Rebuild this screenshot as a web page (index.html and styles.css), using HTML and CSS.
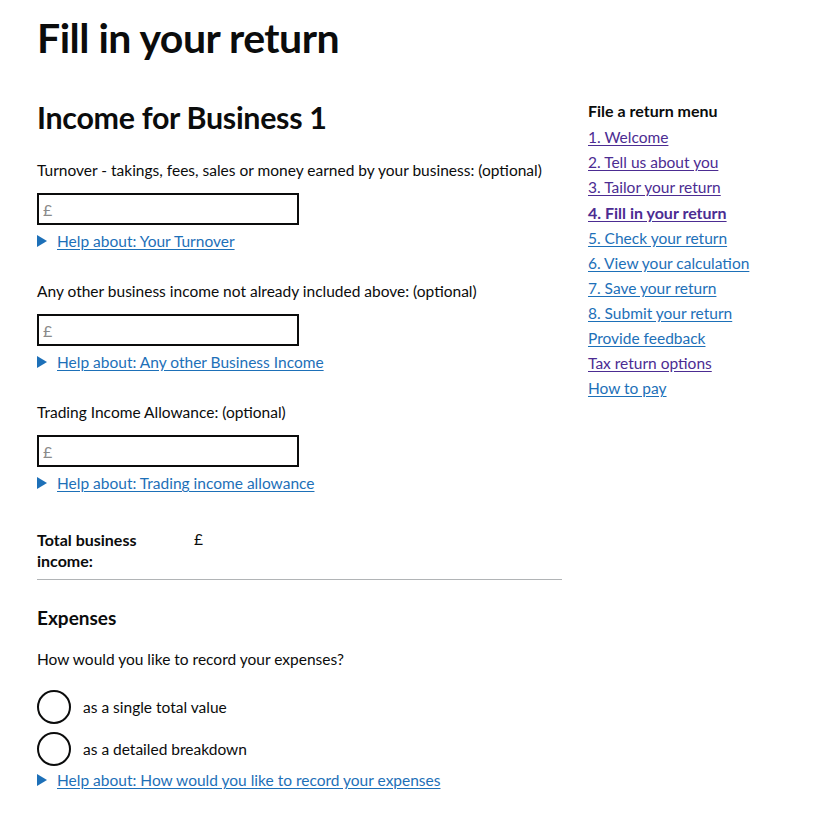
FILE: index.html
```html
<!DOCTYPE html>
<html lang="en">
<head>
<meta charset="utf-8">
<title>Fill in your return</title>
<link rel="stylesheet" href="styles.css">
</head>
<body>
<div class="page">
  <h1 class="title">Fill in your return</h1>
  <div class="layout">
    <main class="main">
      <h2 class="subtitle">Income for Business 1</h2>

      <div class="field">
        <label class="label" for="turnover">Turnover - takings, fees, sales or money earned by your business: (optional)</label>
        <input class="input" id="turnover" type="text" placeholder="£">
        <div class="help"><span class="arrow"></span><a href="#">Help about: Your Turnover</a></div>
      </div>

      <div class="field">
        <label class="label" for="other">Any other business income not already included above: (optional)</label>
        <input class="input" id="other" type="text" placeholder="£">
        <div class="help"><span class="arrow"></span><a href="#">Help about: Any other Business Income</a></div>
      </div>

      <div class="field">
        <label class="label" for="allowance">Trading Income Allowance: (optional)</label>
        <input class="input" id="allowance" type="text" placeholder="£">
        <div class="help"><span class="arrow"></span><a href="#">Help about: Trading income allowance</a></div>
      </div>

      <div class="total">
        <div class="total-key">Total business income:</div>
        <div class="total-value">£</div>
      </div>

      <h3 class="section">Expenses</h3>
      <p class="question">How would you like to record your expenses?</p>
      <div class="radios">
        <label class="radio"><span class="circle"></span><span>as a single total value</span></label>
        <label class="radio"><span class="circle"></span><span>as a detailed breakdown</span></label>
      </div>
      <div class="help"><span class="arrow"></span><a href="#">Help about: How would you like to record your expenses</a></div>
    </main>

    <nav class="side">
      <h2 class="side-title">File a return menu</h2>
      <ul class="menu">
        <li><a class="visited" href="#">1. Welcome</a></li>
        <li><a class="visited" href="#">2. Tell us about you</a></li>
        <li><a class="visited" href="#">3. Tailor your return</a></li>
        <li><a class="current" href="#">4. Fill in your return</a></li>
        <li><a href="#">5. Check your return</a></li>
        <li><a href="#">6. View your calculation</a></li>
        <li><a href="#">7. Save your return</a></li>
        <li><a href="#">8. Submit your return</a></li>
        <li><a href="#">Provide feedback</a></li>
        <li><a class="visited" href="#">Tax return options</a></li>
        <li><a href="#">How to pay</a></li>
      </ul>
    </nav>
  </div>
</div>
</body>
</html>
```

FILE: styles.css
```css
* { box-sizing: border-box; }
html, body { margin: 0; padding: 0; background: #fff; }
body {
  font-family: Lato, "Noto Sans", sans-serif;
  color: #0b0c0c;
  font-size: 15.5px;
}
.page { padding: 14px 37px 0 37px; }
.title {
  font-size: 41px;
  font-weight: 700;
  line-height: 48px;
  margin: 0 0 38px 0;
  letter-spacing: -0.5px;
}
.layout { display: flex; gap: 26px; }
.main { width: 525px; flex: none; }
.side { flex: 1; min-width: 0; }
.subtitle {
  font-size: 30.4px;
  font-weight: 700;
  line-height: 34px;
  margin: 0 0 25px 0;
  letter-spacing: -0.3px;
}
.field { margin-bottom: 28px; }
.label { display: block; line-height: 22px; margin-bottom: 12px; }
.input {
  display: block;
  width: 262px;
  height: 32px;
  border: 2px solid #0b0c0c;
  padding: 0 4px;
  font: inherit;
  font-size: 16px;
  margin: 0 0 5px 0;
  outline: none;
}
.input::placeholder { color: #8a8a8a; }
.help { display: flex; align-items: center; line-height: 22px; }
.arrow {
  width: 0; height: 0;
  border-left: 10px solid #1d70b8;
  border-top: 6px solid transparent;
  border-bottom: 6px solid transparent;
  margin-right: 10px;
}
a { color: #1d70b8; text-decoration: underline; text-underline-offset: 2px; }
a.visited { color: #4c2c92; }
a.current { color: #4c2c92; font-weight: 700; font-size: 16px; }
.total {
  display: flex;
  margin-top: 35px;
  padding-bottom: 8px;
  border-bottom: 1px solid #b1b4b6;
}
.total-key { width: 157px; font-size: 16px; font-weight: 700; line-height: 21px; padding-right: 40px; }
.total-value { line-height: 21px; }
.section { font-size: 19px; font-weight: 700; margin: 25px 0 17px 0; line-height: 26px; }
.question { margin: 0 0 20px 0; line-height: 22px; }
.radios { display: flex; flex-direction: column; gap: 8px; margin-bottom: 3px; }
.radio { display: flex; align-items: center; gap: 12px; line-height: 22px; }
.circle {
  width: 34px; height: 34px;
  border: 2px solid #0b0c0c;
  border-radius: 50%;
  flex: none;
}
.side-title { font-size: 16px; font-weight: 700; margin: 0 0 3px 0; line-height: 22px; }
.menu { list-style: none; margin: 0; padding: 0; }
.menu li { line-height: 25px; }
```
